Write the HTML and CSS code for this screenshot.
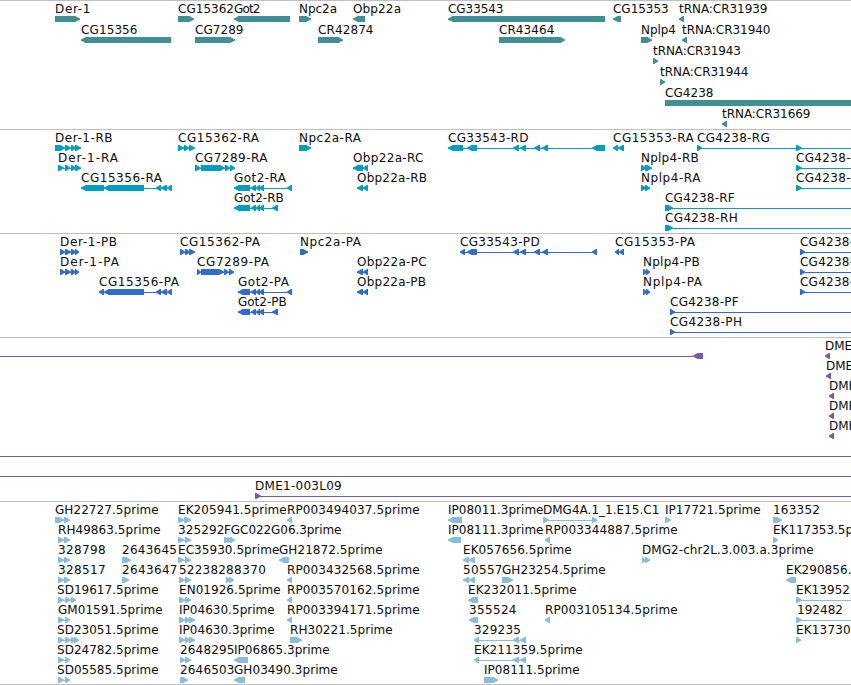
FILE: index.html
```html
<!DOCTYPE html>
<html lang="en">
<head>
<meta charset="utf-8">
<title>Genome tracks</title>
<link rel="stylesheet" href="styles.css">
</head>
<body>
<main class="browser" id="browser"></main>
<script src="tracks.js"></script>
</body>
</html>
```
FILE: styles.css
```css
body {
  margin: 0;
  background: #fff;
  overflow: hidden;
}

.browser {
  display: flex;
  flex-direction: column;
  width: 851px;
  height: 685px;
  overflow: hidden;
}

.track {
  box-sizing: border-box;
  display: flex;
  flex-direction: column;
  flex: none;
  border-top: 1px solid #c0c0c0;
}

.genes { height: 129px; color: #3f8f94; }
.transcripts { height: 104px; color: #009fbf; }
.proteins { height: 104px; color: #316bd0; }
.clones { height: 164px; color: #7759a8; }
.reads { height: 184px; color: #88bbdd; border-bottom: 1px solid #c0c0c0; }

.lane {
  display: block;
  flex: none;
  width: 851px;
  height: 20px;
  overflow: visible;
}

.genes .lane { height: 21px; }

.label {
  font: 12px "DejaVu Sans", sans-serif;
  fill: #0c0c0c;
}

.exon { fill: currentColor; }

.intron {
  fill: currentColor;
  shape-rendering: crispEdges;
}
```
FILE: tracks.js
```js
// Lane entry: label, label start, label end, strand, exon ranges, optional line end.
const tracks = {
  genes: [
    "Der-1,55,90.5,R,55-80;CG15362,178,234,R,178-194;Got2,234,260.5,L,234-290;Npc2a,299,337,R,299-311;Obp22a,353,401,L,353-365;CG33543,448,503.5,L,448-605;CG15353,613,668.7,L,613-621;tRNA:CR31939,679,767.5,L,679-684",
    "CG15356,81,137.5,L,81-171;CG7289,195,243.5,R,195-235;CR42874,318,373.5,R,318-343;CR43464,499,554.3,R,499-565;Nplp4,641,676,R,641-652;tRNA:CR31940,682,770.5,L,682-687",
    "tRNA:CR31943,653,741,R,653-658",
    "tRNA:CR31944,660,748.5,R,660-665",
    "CG4238,665,713.5,R,665-870",
    "tRNA:CR31669,722,810.5,L,722-727"
  ],
  transcripts: [
    "Der-1-RB,55,112.5,R,55-65 65-71 71-76 75-81;CG15362-RA,178,259,R,178-184 184-189 189-195;Npc2a-RA,299,361,R,299-311;CG33543-RD,448,528.5,L,448-463 467-477 513-519 520-526 534-540 542-548 592-605;CG15353-RA,613,693.7,L,613-618 618-624;CG4238-RG,697,769.7,R,697-702 796-802,851",
    "Der-1-RA,58,118,R,58-64 65-70 71-76 75-81;CG7289-RA,195,267.5,R,195-201 201-225 225-230 230-235;Obp22a-RC,353,423.5,L,353-363 363-368;Nplp4-RB,641,698.7,R,641-646 645-652;CG4238-,796,850.5,R,796-802,851",
    "CG15356-RA,81,162,L,81-104 104-144 156-161 161-167 167-172;Got2-RA,234,286,L,234-250 251-256 256-260 259-264 287-292;Obp22a-RB,357,427,L,357-363 363-368;Nplp4-RA,641,700.5,R,641-646 645-650;CG4238-,796,850.5,R,796-802,851",
    "Got2-RB,234,283.7,L,234-250 251-256 256-260 259-264 272-278;CG4238-RF,665,734.7,R,665-673,851",
    "CG4238-RH,665,737.7,R,665-673,851"
  ],
  proteins: [
    "Der-1-PB,60,117,R,60-65 65-71 71-76 75-79;CG15362-PA,180,260,R,180-185 185-190 189-195;Npc2a-PA,300,361,R,300-308;CG33543-PD,460,539.7,L,460-465 467-477 513-519 520-526 534-540 542-548 592-597;CG15353-PA,615,695,L,615-619 619-624;CG4238-,800,854,R,800-805,851",
    "Der-1-PA,60,119,R,60-65 65-71 71-76 75-79;CG7289-PA,197,269,R,197-201 201-224 224-229 229-234;Obp22a-PC,357,426.7,L,357-363 363-368;Nplp4-PB,643,699.7,R,643-647 646-650;CG4238-,800,854,R,800-805,851",
    "CG15356-PA,99,179,L,99-104 104-144 156-161 161-167 167-172;Got2-PA,238,289,L,238-250 251-256 256-260 259-264 287-292;Obp22a-PB,357,426,L,357-363 363-368;Nplp4-PA,643,702,R,643-647 646-650;CG4238-,800,854,R,800-805,851",
    "Got2-PB,238,286.7,L,238-250 251-256 256-260 259-264 272-278;CG4238-PF,670,738.7,R,670-675,851",
    "CG4238-PH,670,742,R,670-675,851"
  ],
  clones: [
    ",0,0,L,0-0 693-703;DME,825,852,L,825-830",
    "DME,826,853,L,826-831",
    "DME,829,856,L,829-834",
    "DME,829,856,L,829-834",
    "DME,829,856,L,829-834",
    ",0,0,R,0-0,851",
    ",0,0,R,0-0,851",
    "DME1-003L09,255,341.7,R,255-261,851"
  ],
  reads: [
    "GH22727.5prime,55,158.7,R,55-64 64-70;EK205941.5prime,178,286.7,R,178-184 184-191;RP003494037.5prime,287,419.7,L,287-292;IP08011.3prime,448,543.5,L,448-462;DMG4A.1_1.E15.C1,543,659.3,R,543-549 592-597;IP17721.5prime,665,760.7,R,665-671;163352,773,820,R,773-782",
    "RH49863.5prime,58,160.7,R,58-64 64-70;325292,178,224.5,R,178-184 185-191;FGC022G06.3prime,224,341.5,R,224-229 227-232 230-235;IP08111.3prime,448,543.5,L,448-461;RP003344887.5prime,545,677.7,L,545-550;EK117353.5p,773,853,R,773-778",
    "328798,58,105.7,R,58-64 64-70;2643645,122,177,R,122-131;EC35930.5prime,178,279.3,R,178-184 185-191;GH21872.5prime,279,382.7,L,279-289;EK057656.5prime,463,571.7,L,463-469 469-475;DMG2-chr2L.3.003.a.3prime,642,813.7,R,642-646 645-650",
    "328517,58,105.7,R,58-64 64-70;2643647,122,177.5,R,122-129;522382,179,226,R,179-185 185-191;88370,226,266,R,226-230 229-234;RP003432568.5prime,287,419.7,L,287-292;50557,463,502.5,L,463-469 469-475;GH23254.5prime,502,605.7,R,502-513;EK290856.,786,851.5,L,786-796",
    "SD19617.5prime,57,158.7,R,58-64 65-71 71-76;EN01926.5prime,179,280.7,R,179-185 185-191;RP003570162.5prime,287,419.7,L,287-292;EK232011.5prime,468,576.7,L,468-478;EK13952,796,850,R,796-802,851",
    "GM01591.5prime,58,162.7,R,58-64 65-70;IP04630.5prime,179,274.7,R,179-185 185-190 189-195;RP003394171.5prime,287,419.7,L,287-292;355524,469,516.5,L,469-478;RP003105134.5prime,545,677.7,L,545-550;192482,797,843,R,796-802,851",
    "SD23051.5prime,57,158.7,R,58-64 65-71 71-76 74-79;IP04630.3prime,179,274.7,R,179-185 185-190 189-195;RH30221.5prime,290,392.7,R,290-302;329235,474,521,L,474-479 513-519 520-526;EK13730,796,850.7,R,796-801",
    "SD24782.5prime,57,158.7,R,58-64 65-70;2648295,180,234.5,R,180-185 185-191;IP06865.3prime,234,329.7,L,234-248;EK211359.5prime,474,582.7,L,474-479 513-519 520-526",
    "SD05585.5prime,57,158.7,R,58-64 65-70;2646503,180,234.5,R,180-188;GH03490.3prime,234,337.7,L,234-245;IP08111.5prime,484,579.7,R,484-498"
  ]
};

const TOP = 15, MID = 18.2, BOTTOM = 21;

function exonShape([a, b], strand) {
  const head = Math.min(6, b - a);
  const left = strand === "L";
  const tip = left ? a : b;
  const tail = left ? b : a;
  const dir = left ? 1 : -1;
  const points = [
    [tip, MID - 0.6],
    [tip + dir * head * 0.5, TOP + 0.9],
    [tip + dir * head * 0.75, TOP],
    [tail, TOP],
    [tail, BOTTOM],
    [tip + dir * head * 0.75, BOTTOM],
    [tip + dir * head * 0.5, BOTTOM - 0.9],
    [tip, MID + 0.6]
  ];
  return `<polygon class="exon" points="${points.map(p => p.join()).join(" ")}"/>`;
}

function feature(text) {
  const [name, from, to, strand, ranges, lineEnd] = text.split(",");
  const exons = ranges.split(" ").map(r => r.split("-").map(Number));
  const start = exons[0][0];
  const end = lineEnd ? Number(lineEnd) : exons[exons.length - 1][0];
  let out = "";
  if (end > start) {
    out += `<rect class="intron" x="${start}" y="18" width="${end - start}" height="1"/>`;
  }
  out += exons.filter(e => e[1] > e[0]).map(e => exonShape(e, strand)).join("");
  if (name) {
    out += `<text class="label" x="${from}" y="12" textLength="${(to - from).toFixed(1)}">${name}</text>`;
  }
  return out;
}

document.getElementById("browser").innerHTML = Object.entries(tracks).map(([kind, lanes]) =>
  `<section class="track ${kind}">` +
  lanes.map(lane => `<svg class="lane">${lane.split(";").map(feature).join("")}</svg>`).join("") +
  "</section>").join("");
```
